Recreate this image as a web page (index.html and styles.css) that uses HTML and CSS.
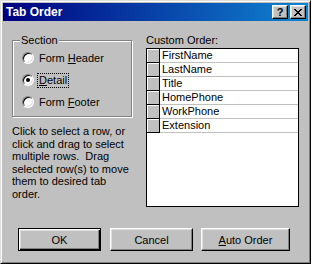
FILE: index.html
```html
<!DOCTYPE html>
<html lang="en">
<head>
    <meta charset="UTF-8">
    <meta name="viewport" content="width=device-width, initial-scale=1.0">
    <title>Tab Order</title>
    <link rel="stylesheet" href="styles.css">
</head>
<body>
<div class="window">
    <div class="caption">
        <span class="caption-title">Tab Order</span>
        <span class="caption-btn help">?</span>
        <span class="caption-btn close">
            <svg width="8" height="7" viewBox="0 0 8 7" shape-rendering="crispEdges">
                <path d="M0 0h2v1H0zM6 0h2v1H6zM1 1h2v1H1zM5 1h2v1H5zM2 2h4v1H2zM3 3h2v1H3zM2 4h4v1H2zM1 5h2v1H1zM5 5h2v1H5zM0 6h2v1H0zM6 6h2v1H6z" fill="#000"/>
            </svg>
        </span>
    </div>

    <div class="content">
        <div class="left">
            <fieldset class="section">
                <legend>Section</legend>
                <div class="option"><span class="radio"></span><span>Form <u>H</u>eader</span></div>
                <div class="option"><span class="radio checked"></span><span class="focus"><u>D</u>etail</span></div>
                <div class="option"><span class="radio"></span><span>Form <u>F</u>ooter</span></div>
            </fieldset>
            <p class="hint">Click to select a row, or<br>click and drag to select<br>multiple rows.&nbsp; Drag<br>selected row(s) to move<br>them to desired tab<br>order.</p>
        </div>

        <div class="right">
            <div class="grid-label">Custom Order:</div>
            <div class="grid">
                <div class="row"><span class="sel"></span><span class="cell">FirstName</span></div>
                <div class="row"><span class="sel"></span><span class="cell">LastName</span></div>
                <div class="row"><span class="sel"></span><span class="cell">Title</span></div>
                <div class="row"><span class="sel"></span><span class="cell">HomePhone</span></div>
                <div class="row"><span class="sel"></span><span class="cell">WorkPhone</span></div>
                <div class="row"><span class="sel"></span><span class="cell">Extension</span></div>
            </div>
        </div>
    </div>

    <div class="buttons">
        <button class="btn default">OK</button>
        <button class="btn">Cancel</button>
        <button class="btn wide"><u>A</u>uto Order</button>
    </div>
</div>
</body>
</html>
```

FILE: styles.css
```css
body {
    margin: 0;
    font-family: "Liberation Sans", Arial, sans-serif;
    font-size: 11px;
    color: #000;
}
.window {
    width: 311px;
    height: 264px;
    box-sizing: border-box;
    display: flex;
    flex-direction: column;
    background: #c0c0c0;
    border: 1px solid;
    border-color: #dfdfdf #000 #000 #dfdfdf;
    box-shadow: inset 1px 1px #fff, inset -1px -1px #808080;
    padding: 2px;
}
.caption {
    height: 18px;
    display: flex;
    align-items: center;
    padding: 0 2px 0 3px;
    background: linear-gradient(to right, #000080, #1084d0);
    color: #fff;
}
.caption-title {
    flex: 1;
    font-weight: bold;
    font-size: 12px;
}
.caption-btn {
    width: 16px;
    height: 14px;
    box-sizing: border-box;
    display: flex;
    align-items: center;
    justify-content: center;
    background: #c0c0c0;
    border: 1px solid;
    border-color: #fff #000 #000 #fff;
    box-shadow: inset -1px -1px #808080, inset 1px 1px #dfdfdf;
    color: #000;
    font-weight: bold;
    font-size: 11px;
    line-height: 12px;
}
.help {
    margin-right: 2px;
}
.content {
    display: grid;
    grid-template-columns: 120px 153px;
    column-gap: 14px;
    padding: 13px 0 0 9px;
}
.section {
    margin: 0;
    min-width: 0;
    padding: 1px 8px 3px 9px;
    border: 1px solid #808080;
    box-shadow: 1px 1px 0 #fff, inset 1px 1px 0 #fff;
}
.section legend {
    padding: 0 1px;
    margin-left: -2px;
    line-height: 12px;
    background: #c0c0c0;
}
.option {
    display: flex;
    align-items: center;
    gap: 5px;
    height: 22px;
}
.radio {
    position: relative;
    width: 12px;
    height: 12px;
    box-sizing: border-box;
    border-radius: 50%;
    background: #fff;
    border: 1px solid;
    border-color: #808080 #fff #fff #808080;
    box-shadow: inset 1px 1px #000, inset -1px -1px #dfdfdf;
}
.radio.checked::after {
    content: "";
    position: absolute;
    left: 3px;
    top: 3px;
    width: 4px;
    height: 4px;
    border-radius: 50%;
    background: #000;
}
.focus {
    padding: 0 1px;
    margin-left: -1px;
    line-height: 13px;
    outline: 1px dotted #000;
}
.hint {
    margin: 8px 0 0;
    line-height: 12.6px;
}
.grid-label {
    line-height: 12px;
    margin-bottom: 2px;
}
.grid {
    height: 159px;
    box-sizing: border-box;
    border: 1px solid #000;
    background: #fff;
}
.row {
    display: flex;
    height: 14px;
}
.sel {
    width: 13px;
    box-sizing: border-box;
    background: #c0c0c0;
    border-right: 1px solid #000;
    border-bottom: 1px solid #000;
    box-shadow: inset 1px 1px #fff;
}
.cell {
    flex: 1;
    padding-left: 2px;
    line-height: 13px;
    border-bottom: 1px solid #c0c0c0;
}
.buttons {
    display: flex;
    gap: 8px;
    margin-top: auto;
    margin-bottom: 10px;
    padding-left: 15px;
}
.btn {
    width: 83px;
    height: 23px;
    padding: 0;
    font-family: "Liberation Sans", Arial, sans-serif;
    font-size: 11px;
    color: #000;
    background: #c0c0c0;
    border: 1px solid;
    border-color: #fff #000 #000 #fff;
    box-shadow: inset -1px -1px #808080, inset 1px 1px #dfdfdf;
}
.btn.default {
    margin-right: 1px;
    border-color: #000;
    box-shadow: inset 1px 1px #fff, inset -1px -1px #000, inset -2px -2px #808080, inset 2px 2px #dfdfdf;
}
.btn.wide {
    width: 89px;
}
```
